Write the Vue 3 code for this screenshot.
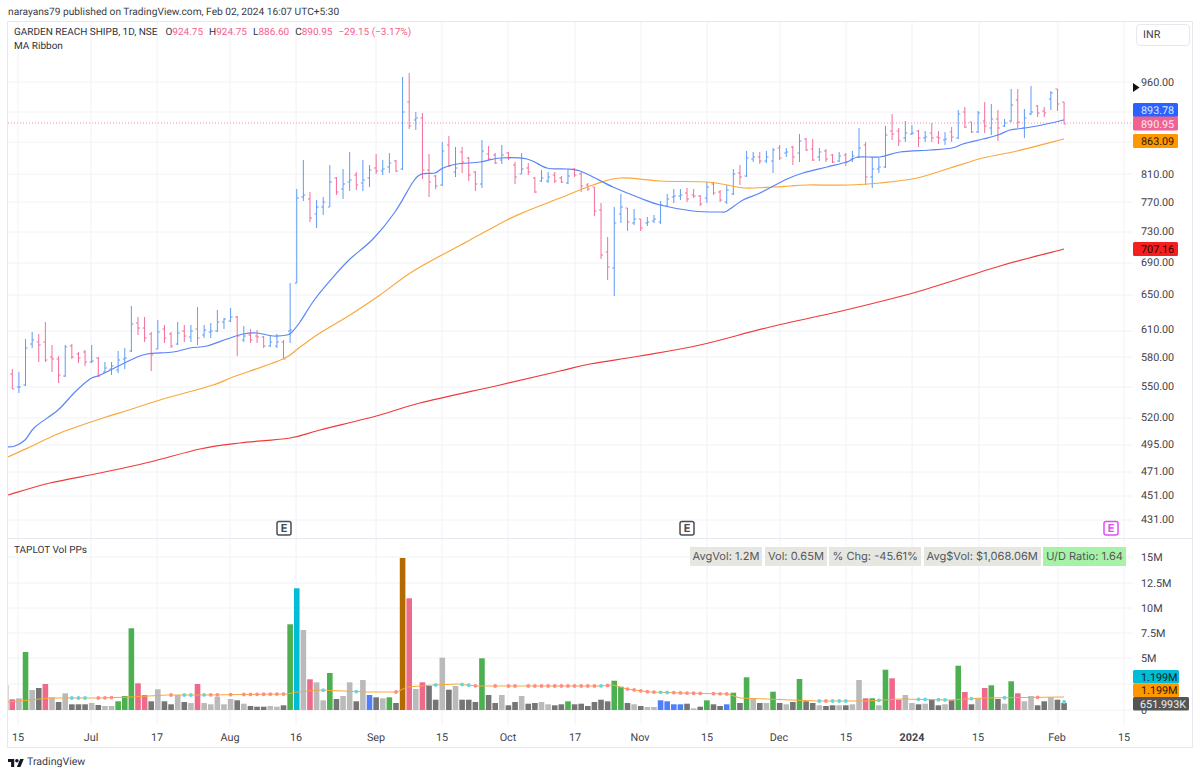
<template>
  <div class="page">
    <div class="published">narayans79 published on TradingView.com, Feb 02, 2024 16:07 UTC+5:30</div>

    <div class="frame">
      <!-- price pane -->
      <section class="pane pane-price">
        <svg class="chart" width="1184" height="516" viewBox="8 22 1184 516">
          <line v-for="x in gridX" :key="'v' + x" class="grid" :x1="x" y1="22" :x2="x" y2="538" />
          <line v-for="y in priceGridY" :key="'h' + y" class="grid" x1="8" :y1="y" x2="1133" :y2="y" />

          <line class="last-line" x1="8" y1="123" x2="1133" y2="123" />

          <path :d="bearBars" class="bars bear" />
          <path :d="bullBars" class="bars bull" />

          <path class="ma" stroke="#ef3b3b" :d="maSlow" />
          <path class="ma" stroke="#f9a83a" :d="maMid" />
          <path class="ma" stroke="#5b85f7" :d="maFast" />

          <text v-for="p in priceLabels" :key="p.t" class="axis" x="1141" :y="p.y + 4">{{ p.t }}</text>
          <polygon points="1133,83 1139.5,87.5 1133,92" fill="#111" />

          <g v-for="t in priceTags" :key="t.t">
            <rect :x="1133" :y="t.y" width="45" height="14" rx="1.5" :fill="t.bg" />
            <text class="axis" x="1141" :y="t.y + 11" :fill="t.fg">{{ t.t }}</text>
          </g>

          <g v-for="e in earnings" :key="e.x">
            <rect :x="e.x - 7" y="521.5" width="14" height="13.5" rx="2" fill="#fff" :stroke="e.c" stroke-width="1.5" />
            <text class="earn" :x="e.x" y="532" :fill="e.c" text-anchor="middle">E</text>
          </g>
        </svg>

        <div class="legend">
          <div class="legend-row">
            <span class="symbol">GARDEN REACH SHIPB, 1D, NSE</span>
            <span class="ohlc">O<b>924.75</b></span>
            <span class="ohlc">H<b>924.75</b></span>
            <span class="ohlc">L<b>886.60</b></span>
            <span class="ohlc">C<b>890.95</b></span>
            <b class="chg">−29.15 (−3.17%)</b>
          </div>
          <div>MA Ribbon</div>
        </div>
        <div class="currency">INR</div>
      </section>

      <!-- volume pane -->
      <section class="pane pane-vol">
        <svg class="chart" width="1184" height="207" viewBox="8 539 1184 207">
          <line v-for="x in gridX" :key="'v' + x" class="grid" :x1="x" y1="539" :x2="x" y2="725" />
          <line v-for="l in volLabels" :key="'h' + l.y" class="grid" x1="8" :y1="l.y" x2="1133" :y2="l.y" />

          <rect x="7.5" y="685" width="1.2" height="25" fill="#c4c4c4" />
          <rect
            v-for="b in volBars"
            :key="b.i"
            :x="b.x - 2.8"
            :y="710 - b.h"
            width="5.6"
            :height="b.h"
            :fill="volColors[b.c]"
          />

          <polyline class="ma thin" stroke="#f9a83a" :points="volMaPoints" />
          <circle v-for="d in volDots" :key="d.i" :cx="d.x" :cy="d.y" r="1.9" :fill="d.c" />

          <text v-for="l in volLabels" :key="l.y" class="axis" x="1141" :y="l.y + 4">{{ l.t }}</text>

          <g v-for="t in volTags" :key="t.t + t.y">
            <rect x="1133" :y="t.y" :width="t.w" :height="t.h" rx="1.5" :fill="t.bg" />
            <text class="axis" :x="t.tx" :y="t.y + 10.5" :fill="t.fg">{{ t.t }}</text>
          </g>

          <text
            v-for="t in timeLabels"
            :key="t.t + t.x"
            class="axis"
            :class="{ year: t.bold }"
            :x="t.x"
            y="741"
            text-anchor="middle"
          >{{ t.t }}</text>
        </svg>

        <div class="pane-title">TAPLOT Vol PPs</div>
        <div class="stats">
          <span v-for="s in stats" :key="s.t" class="stat" :class="{ good: s.good }">{{ s.t }}</span>
        </div>
      </section>
    </div>

    <footer class="brand">
      <svg class="brand-logo" width="16" height="10" viewBox="0 0 36 22">
        <path d="M14 22H7V11H0V4h14v18zM28 22h-8l7.5-18h8L28 22z" fill="#131722" />
        <circle cx="20" cy="8" r="4" fill="#131722" />
      </svg>
      <span>TradingView</span>
    </footer>
  </div>
</template>

<script setup>
const gridX = [18, 91, 157, 230, 296, 376, 442, 508, 575, 641, 707, 780, 846, 912, 979, 1058, 1124]
const priceGridY = [82, 112, 142, 174, 202, 232, 263, 295, 331, 357, 387, 418, 445, 472, 496, 520]

const priceLabels = [
  { t: '960.00', y: 82 }, { t: '810.00', y: 174 }, { t: '770.00', y: 202 },
  { t: '730.00', y: 231 }, { t: '690.00', y: 262 }, { t: '650.00', y: 294 },
  { t: '610.00', y: 329 }, { t: '580.00', y: 357 }, { t: '550.00', y: 386 },
  { t: '520.00', y: 417 }, { t: '495.00', y: 444 }, { t: '471.00', y: 471 },
  { t: '451.00', y: 495 }, { t: '431.00', y: 519 },
]

const priceTags = [
  { t: '893.78', y: 103, bg: '#2962ff', fg: '#dfe6ff' },
  { t: '890.95', y: 116.5, bg: '#f06292', fg: '#ffe6ee' },
  { t: '863.09', y: 134, bg: '#ff9800', fg: '#2a1a00' },
  { t: '707.16', y: 242, bg: '#f51f1f', fg: '#2a0505' },
]

const earnings = [
  { x: 284, c: '#4a4d57' },
  { x: 687, c: '#4a4d57' },
  { x: 1111, c: '#e04ff5' },
]

// [high, low, open, close] in screen pixels, one row per trading day
const ohlc = [
  [369, 389, 374, 389], [372, 393, 387, 387], [339, 386, 385, 348], [332, 348, 344, 340],
  [334, 362, 342, 345], [322, 362, 342, 360], [345, 372, 357, 359], [356, 383, 359, 375],
  [345, 377, 376, 347], [344, 359, 346, 357], [352, 363, 354, 358], [350, 366, 352, 362],
  [345, 363, 362, 361], [357, 377, 358, 376], [362, 373, 372, 368], [362, 375, 369, 366],
  [351, 373, 370, 360], [348, 369, 359, 358], [306, 352, 351, 324], [317, 335, 323, 328],
  [317, 342, 328, 338], [332, 371, 334, 355], [320, 349, 349, 332], [325, 343, 329, 338],
  [332, 348, 334, 346], [322, 345, 344, 333], [325, 342, 331, 336], [325, 342, 337, 331],
  [307, 345, 329, 338], [325, 338, 335, 330], [323, 338, 332, 331], [310, 332, 331, 322],
  [318, 329, 322, 319], [308, 322, 321, 317], [316, 356, 317, 336], [326, 342, 340, 336],
  [329, 343, 335, 340], [330, 343, 336, 337], [336, 348, 337, 346], [335, 347, 346, 342],
  [334, 348, 346, 342], [340, 359, 342, 359], [283, 343, 331, 330], [189, 283, 283, 198],
  [160, 201, 197, 195], [192, 222, 199, 218], [200, 228, 214, 207], [197, 215, 207, 202],
  [165, 207, 207, 182], [177, 195, 178, 192], [169, 199, 189, 184], [152, 191, 182, 180],
  [172, 190, 175, 185], [160, 191, 183, 180], [165, 187, 178, 170], [154, 174, 168, 171],
  [160, 175, 171, 169], [153, 173, 167, 163], [160, 172, 161, 171], [77, 170, 169, 112],
  [73, 129, 102, 126], [112, 130, 120, 118], [113, 179, 118, 170], [154, 197, 170, 182],
  [175, 189, 176, 186], [142, 186, 185, 151], [136, 167, 145, 166], [147, 177, 172, 168],
  [147, 173, 152, 162], [157, 181, 158, 175], [171, 191, 172, 184], [140, 188, 184, 151],
  [146, 160, 154, 159], [153, 164, 155, 163], [145, 164, 160, 155], [152, 160, 153, 158],
  [162, 184, 165, 177], [153, 174, 174, 169], [163, 175, 168, 172], [177, 193, 178, 192],
  [170, 182, 181, 178], [172, 183, 181, 177], [172, 183, 175, 181], [176, 183, 178, 182],
  [169, 184, 183, 176], [168, 177, 169, 175],
  [172, 192, 174, 186], [183, 191, 185, 189], [187, 216, 187, 211], [203, 259, 210, 255],
  [237, 280, 252, 267], [207, 296, 268, 223], [194, 223, 214, 207], [208, 231, 208, 222],
  [209, 225, 223, 219], [219, 231, 219, 228], [217, 226, 223, 222], [215, 223, 221, 219],
  [201, 224, 222, 205], [194, 207, 206, 199], [189, 203, 197, 196], [189, 200, 196, 195],
  [188, 202, 193, 199], [189, 198, 195, 196], [195, 206, 196, 204], [182, 203, 198, 187],
  [182, 195, 184, 193], [190, 202, 192, 200], [185, 204, 202, 190], [169, 195, 194, 174],
  [165, 185, 173, 177], [151, 177, 176, 158], [152, 162, 159, 157], [152, 164, 157, 161],
  [151, 163, 161, 157], [148, 173, 161, 150], [145, 160, 148, 158], [148, 157, 153, 152],
  [146, 165, 147, 157], [134, 162, 153, 141], [138, 151, 139, 150], [139, 161, 149, 160],
  [148, 161, 157, 152], [149, 162, 151, 159], [154, 163, 155, 162], [152, 162, 161, 156],
  [153, 166, 155, 162], [151, 162, 159, 156], [128, 158, 157, 148],
  [142, 185, 145, 177], [157, 188, 177, 169], [158, 173, 169, 167], [126, 168, 167, 135],
  [114, 140, 131, 134], [128, 146, 131, 141], [121, 142, 138, 133], [125, 135, 134, 133],
  [130, 147, 131, 138], [131, 142, 138, 137], [123, 142, 133, 138], [131, 144, 137, 138],
  [132, 145, 140, 139], [127, 142, 132, 137], [110, 139, 138, 114], [107, 128, 112, 127],
  [122, 133, 122, 132], [111, 133, 132, 113], [102, 133, 121, 126], [104, 135, 128, 119],
  [110, 141, 119, 128], [119, 127, 126, 123], [89, 122, 121, 105], [89, 128, 100, 122],
  [109, 138, 128, 118], [86, 115, 114, 112], [105, 117, 106, 113], [107, 117, 111, 113],
  [91, 110, 99, 93], [89, 111, 89, 104], [102, 124, 102, 124],
]

const barX = (i) => 12.3 + i * 6.615

const barPath = (rising) =>
  ohlc
    .map((b, i) => [b, barX(i)])
    .filter(([b]) => (b[3] <= b[2]) === rising)
    .map(([[h, l, o, c], x]) => `M${x} ${h}V${l}M${x - 2} ${o}H${x}M${x} ${c}H${x + 2}`)
    .join('')

const bullBars = barPath(true)
const bearBars = barPath(false)

// rounds the moving average corners (catmull-rom to bezier)
const smooth = (str) => {
  const p = str.split(' ').map((s) => s.split(',').map(Number))
  let d = `M${p[0][0]} ${p[0][1]}`
  for (let i = 0; i < p.length - 1; i++) {
    const a = p[Math.max(i - 1, 0)]
    const b = p[i]
    const c = p[i + 1]
    const e = p[Math.min(i + 2, p.length - 1)]
    const c1x = b[0] + (c[0] - a[0]) / 6
    const c1y = b[1] + (c[1] - a[1]) / 6
    const c2x = c[0] - (e[0] - b[0]) / 6
    const c2y = c[1] - (e[1] - b[1]) / 6
    d += `C${c1x} ${c1y} ${c2x} ${c2y} ${c[0]} ${c[1]}`
  }
  return d
}

const maFast = smooth('8,447 15,446 25,440 35,427 58,410 75,392 90,379 100,375 133,359 147,354 173,352 190,348 207,346 227,339 243,334 257,333 273,336 287,335 292,332 300,322 315,299 335,275 350,259 373,239 395,212 413,182 422,174 435,173 443,168 457,164 480,162 500,158 527,159 547,168 567,169 580,171 593,177 613,187 640,198 660,205 693,211 720,212 727,211 743,200 760,193 787,179 803,173 827,167 847,162 858,157 880,157 900,152 930,150 952,148 963,144 983,139 998,135 1010,130 1025,128 1042,125 1064,120')
const maMid = smooth('8,457 30,447 60,433 100,419 129,410 160,400 213,385 233,377 283,359 300,347 320,333 350,315 380,295 415,270 470,240 507,220 527,211 560,198 593,185 620,178 660,181 707,182 727,185 745,188 773,187 790,186 807,185 850,185 880,183 917,178 950,168 983,158 1017,151 1064,139')
const maSlow = smooth('8,495 50,483 100,473 150,462 200,449 240,443 290,438 320,430 380,415 420,403 500,385 560,371 590,364 640,356 700,345 770,327 850,309 920,291 1000,266 1064,249')

const volLabels = [
  { t: '15M', y: 557 }, { t: '12.5M', y: 583 }, { t: '10M', y: 608 },
  { t: '7.5M', y: 633 }, { t: '5M', y: 658 }, { t: '', y: 684 }, { t: '0', y: 710 },
]

const volTags = [
  { t: '1.199M', y: 670, w: 46, h: 13.5, tx: 1141, bg: '#00bcd4', fg: '#06252b' },
  { t: '1.199M', y: 683.5, w: 46, h: 13.5, tx: 1141, bg: '#ff9800', fg: '#2a1a00' },
  { t: '651.993K', y: 697, w: 56, h: 13.5, tx: 1140, bg: '#555553', fg: '#f0f0f0' },
]

const volColors = {
  r: '#ee6a8a', g: '#4caf50', k: '#757575', l: '#bababa',
  b: '#4f7ffa', c: '#00bcd4', o: '#b36a00',
}

// height in px and colour code of each volume bar
const volData = [
  [10.7, 'r'], [11.7, 'l'], [58, 'g'], [20, 'l'], [22, 'k'], [26, 'r'], [12.7, 'l'], [8, 'k'],
  [16.7, 'l'], [5.7, 'k'], [5.7, 'k'], [5.7, 'k'], [7, 'l'], [5, 'k'], [4, 'l'], [4, 'l'],
  [8.7, 'g'], [14, 'g'], [81.7, 'g'], [26.7, 'r'], [15, 'r'], [8.7, 'k'], [20.7, 'l'], [8.7, 'k'],
  [5.7, 'k'], [15, 'l'], [8, 'k'], [7, 'l'], [26, 'r'], [7, 'l'], [5.7, 'l'], [13.3, 'l'],
  [5.7, 'l'], [11, 'l'], [9.7, 'k'], [6.3, 'l'], [4, 'k'], [3.3, 'k'], [3.3, 'k'], [4, 'l'],
  [3.3, 'l'], [4.7, 'k'], [85.7, 'g'], [121.7, 'c'], [80, 'l'], [30.7, 'r'], [27.7, 'l'], [9.7, 'l'],
  [37, 'g'], [11, 'k'], [14, 'l'], [27.7, 'l'], [8.7, 'k'], [30, 'l'], [15, 'b'], [12.7, 'k'],
  [11.7, 'l'], [12.7, 'g'], [7, 'k'], [152, 'o'], [111.7, 'r'], [21, 'l'], [27.7, 'r'], [24, 'k'],
  [10.3, 'k'], [52.3, 'l'], [20.3, 'k'], [24, 'l'], [10.3, 'k'], [10.3, 'k'], [8, 'k'], [51.7, 'g'],
  [15, 'k'], [7, 'k'], [15, 'l'], [4.7, 'k'], [8, 'k'], [14, 'l'], [6.3, 'k'], [7, 'k'],
  [8, 'l'], [5.7, 'l'], [4.7, 'k'], [5.7, 'k'], [8.7, 'g'], [5.7, 'k'], [6.3, 'k'], [4, 'k'],
  [8, 'k'], [10.3, 'k'], [8.7, 'k'], [29.3, 'g'], [23.3, 'g'], [7, 'k'], [5.7, 'l'], [4, 'k'],
  [3, 'l'], [3, 'l'], [9.7, 'b'], [8.7, 'b'], [5.7, 'b'], [5.7, 'b'], [6.3, 'k'], [1.7, 'l'],
  [3.3, 'k'], [9.7, 'g'], [5.7, 'k'], [4, 'k'], [5.7, 'b'], [17.3, 'g'], [7, 'k'], [32.7, 'g'],
  [11.7, 'l'], [7, 'k'], [7, 'l'], [18.3, 'g'], [7, 'k'], [5.7, 'l'], [8, 'k'], [31, 'g'],
  [8.7, 'k'], [7, 'k'], [4.7, 'l'], [4, 'k'], [4.7, 'k'], [4.7, 'l'], [4.7, 'k'], [5.7, 'l'],
  [30, 'l'], [11.7, 'r'], [11.7, 'g'], [4.7, 'l'], [40.3, 'g'], [31.7, 'r'], [10.3, 'r'], [15, 'l'],
  [7, 'l'], [5.7, 'k'], [6.3, 'l'], [10.3, 'k'], [4.7, 'k'], [5.7, 'l'], [9.7, 'k'], [44.3, 'g'],
  [18, 'r'], [5.7, 'k'], [11.7, 'l'], [22, 'r'], [24.7, 'g'], [11, 'k'], [6.3, 'l'], [28.7, 'g'],
  [16.7, 'r'], [8.7, 'l'], [14, 'l'], [4.7, 'k'], [8.7, 'k'], [12.7, 'l'], [10.3, 'k'], [7, 'k'],
]

const volBars = volData.map(([h, c], i) => ({ i, h, c, x: barX(i) }))

const volMa = [
  [8, 702], [50, 698], [100, 698], [130, 697], [167, 695], [200, 695], [287, 694], [297, 692],
  [320, 690], [343, 691], [367, 692], [397, 692], [407, 687], [433, 685], [457, 684], [477, 686],
  [600, 686], [613, 685], [627, 689], [650, 692], [683, 693], [728, 694], [740, 698], [767, 699],
  [817, 701], [867, 701], [900, 699], [950, 700], [983, 698], [1064, 697],
]
const volMaPoints = volMa.map((p) => p.join(',')).join(' ')

const volMaAt = (x) => {
  const k = volMa.findIndex((p) => p[0] >= x)
  if (k <= 0) return volMa[0][1]
  const [x0, y0] = volMa[k - 1]
  const [x1, y1] = volMa[k]
  return y0 + ((x - x0) / (x1 - x0)) * (y1 - y0)
}

const cyanDots = [9, 10, 11, 26, 27, 29, 47, 52, 64, 68, 69, 89, 98, 99, 122, 124, 125, 126, 131, 137, 138, 140, 141, 145, 150, 159]
const redDots = [13, 14, 15, 24, 30, 31, 33, 35, 36, 37, 38, 39, 40, 41, 58, 70, 73, 75, 76, 78, 79, 80, 81, 82, 83, 84, 85, 86, 87, 88, 90, 93, 94, 95, 96, 97, 100, 101, 102, 103, 104, 106, 107, 108, 123, 155]

const volDots = [
  ...cyanDots.map((i) => ({ i, c: '#62d6e2' })),
  ...redDots.map((i) => ({ i, c: '#ff8d85' })),
].map((d) => ({ ...d, x: barX(d.i), y: volMaAt(barX(d.i)) }))

const timeLabels = [
  { t: '15', x: 18 }, { t: 'Jul', x: 91 }, { t: '17', x: 157 }, { t: 'Aug', x: 230 },
  { t: '16', x: 296 }, { t: 'Sep', x: 376 }, { t: '15', x: 442 }, { t: 'Oct', x: 508 },
  { t: '17', x: 575 }, { t: 'Nov', x: 640 }, { t: '15', x: 707 }, { t: 'Dec', x: 779 },
  { t: '15', x: 846 }, { t: '2024', x: 912, bold: true }, { t: '15', x: 978 },
  { t: 'Feb', x: 1057 }, { t: '15', x: 1124 },
]

const stats = [
  { t: 'AvgVol: 1.2M' },
  { t: 'Vol: 0.65M' },
  { t: '% Chg: -45.61%' },
  { t: 'Avg$Vol: $1,068.06M' },
  { t: 'U/D Ratio: 1.64', good: true },
]
</script>

<style>
html,
body {
  margin: 0;
  background: #fff;
}
</style>

<style scoped>
.page {
  width: 1200px;
  height: 775px;
  font-family: Inter, "Liberation Sans", sans-serif;
  color: #2f3240;
  overflow: hidden;
  text-rendering: geometricPrecision;
}
.published {
  height: 21px;
  padding-left: 8px;
  font-family: Roboto, "Liberation Sans", sans-serif;
  font-size: 10.2px;
  line-height: 25px;
  color: #3a3d47;
}
.frame {
  width: 1184px;
  margin-left: 7px;
  border: 1px solid #e6e8f0;
  height: 725px;
  display: flex;
  flex-direction: column;
}
.pane {
  position: relative;
}
.pane-price {
  height: 516px;
  border-bottom: 1px solid #e6e8f0;
}
.pane-vol {
  height: 207px;
}
.chart {
  display: block;
}
.grid {
  stroke: #f1f2f5;
  stroke-width: 1;
}
.last-line {
  stroke: #f48fb1;
  stroke-width: 1;
  stroke-dasharray: 1 2;
}
.bars {
  fill: none;
  stroke-width: 1;
}
.bull {
  stroke: #5f9bf5;
}
.bear {
  stroke: #f26d9a;
}
.ma {
  fill: none;
  stroke-width: 1.2;
}
.ma.thin {
  stroke-width: 1;
}
.axis {
  font-family: Roboto, "Liberation Sans", sans-serif;
  font-size: 10.8px;
}
.axis:not([fill]) {
  fill: #3f424c;
}
.year {
  font-weight: 700;
}
.earn {
  font-size: 11px;
  font-weight: 700;
}
.legend {
  position: absolute;
  left: 6px;
  top: 4px;
  font-family: Roboto, "Liberation Sans", sans-serif;
  font-size: 10px;
  line-height: 14px;
  color: #2f3240;
}
.legend-row {
  display: flex;
  gap: 6px;
}
.symbol {
  margin-right: 2px;
}
.ohlc b,
.chg {
  font-weight: 400;
  color: #f5628f;
}
.currency {
  position: absolute;
  left: 1128px;
  top: 2px;
  width: 46px;
  height: 20px;
  padding-left: 6px;
  border: 1px solid #e6e8f0;
  border-radius: 4px;
  font-family: Roboto, "Liberation Sans", sans-serif;
  font-size: 10.8px;
  line-height: 20px;
  color: #3f424c;
}
.pane-title {
  position: absolute;
  left: 6px;
  top: 4px;
  font-family: Roboto, "Liberation Sans", sans-serif;
  font-size: 10px;
  line-height: 15px;
}
.stats {
  position: absolute;
  right: 66px;
  top: 8px;
  display: flex;
  gap: 2.5px;
}
.stat {
  height: 19px;
  padding: 0 3px;
  background: #e7e7e2;
  color: #55575c;
  font-size: 11.08px;
  line-height: 19px;
  white-space: nowrap;
}
.stat.good {
  background: #a6f2a6;
}
.brand {
  display: flex;
  align-items: center;
  gap: 3px;
  padding: 7px 0 0 8px;
  font-family: Roboto, "Liberation Sans", sans-serif;
  font-size: 10.6px;
  color: #3a3d47;
}
.brand-logo {
  display: block;
}
</style>
